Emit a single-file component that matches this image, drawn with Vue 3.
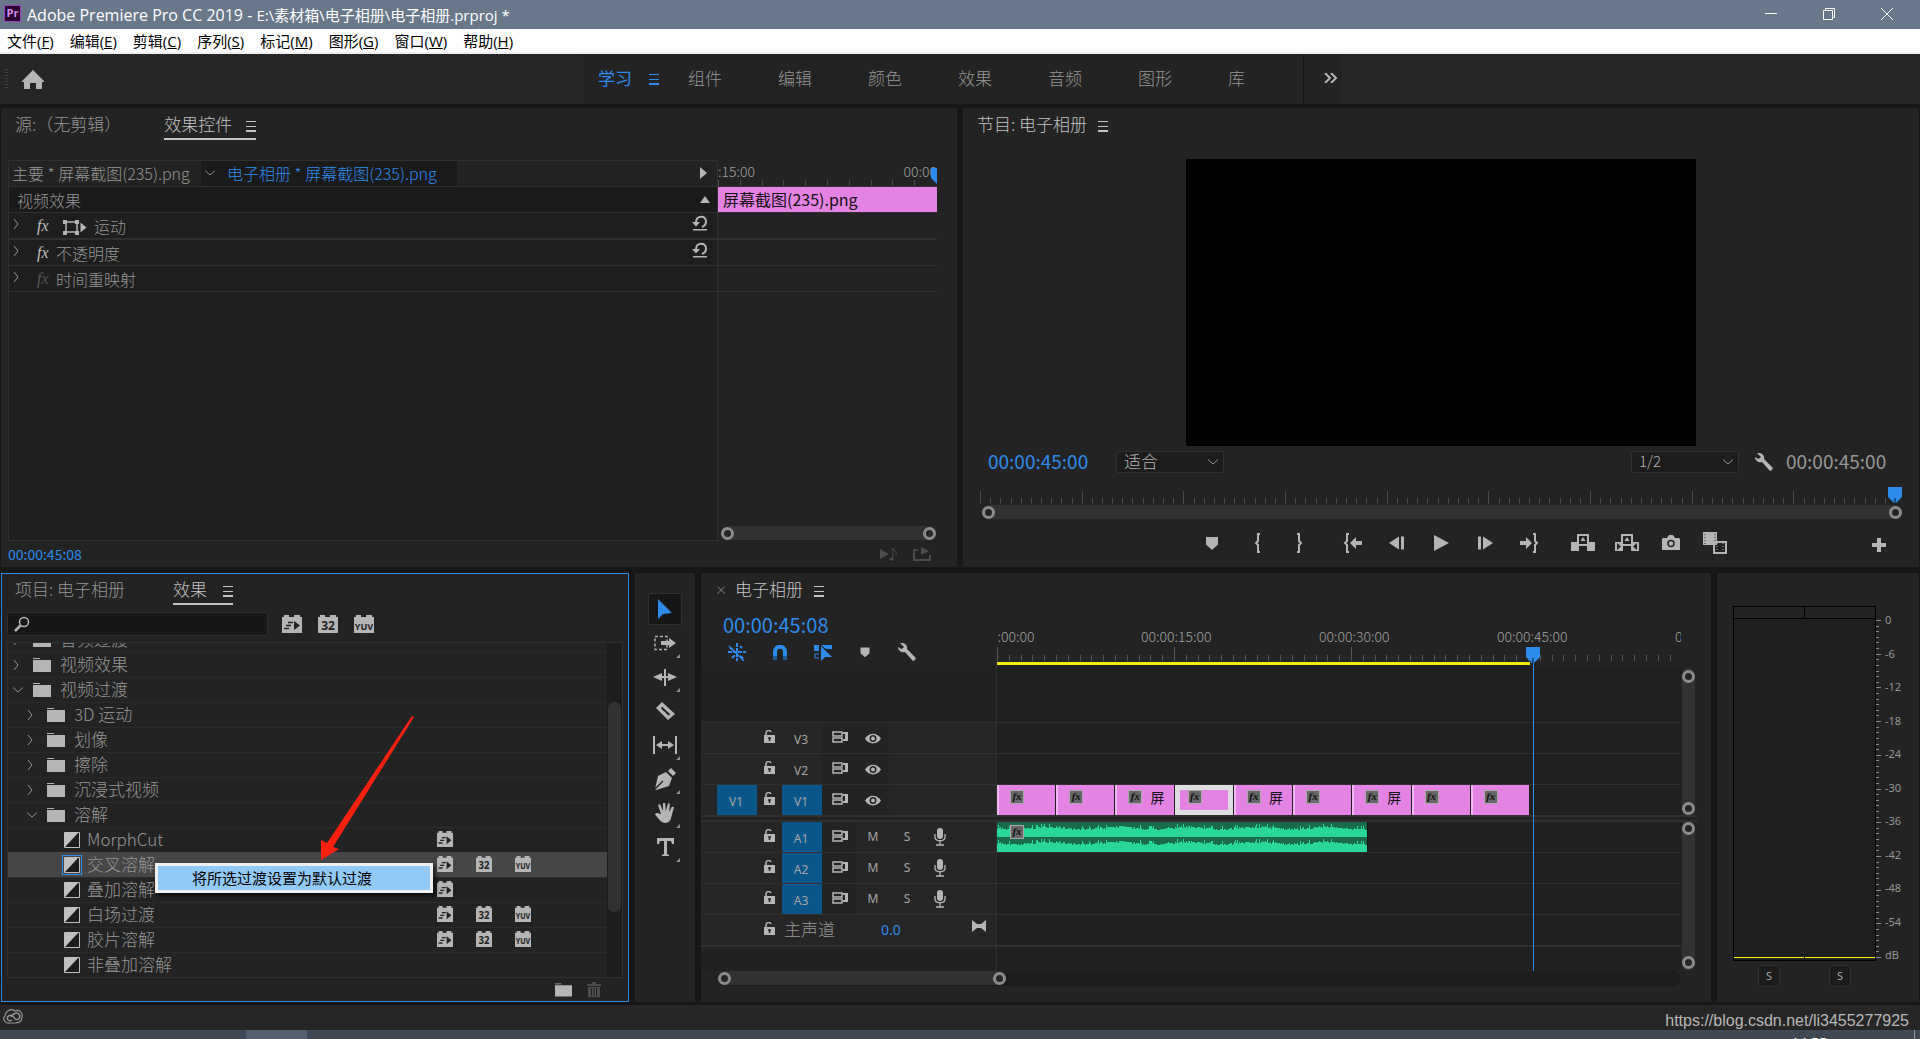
<script setup>
const menus = [
  ['文件', 'F'], ['编辑', 'E'], ['剪辑', 'C'], ['序列', 'S'],
  ['标记', 'M'], ['图形', 'G'], ['窗口', 'W'], ['帮助', 'H'],
]

const workspaces = ['学习', '组件', '编辑', '颜色', '效果', '音频', '图形', '库']

const effectRows = [
  { name: '运动', motion: true, reset: true, thick: true },
  { name: '不透明度', reset: true },
  { name: '时间重映射', dim: true },
]

const transport = [
  ['marker', 16], ['in', 12], ['out', 12], ['goin', 20], ['stepback', 16], ['play', 16],
  ['stepfwd', 16], ['goout', 20], ['lift', 24], ['extract', 24], ['camera', 18], ['compare', 24],
]

const tree = [
  { kind: 'folder', level: 0, name: '音频过渡' },
  { kind: 'folder', level: 0, name: '视频效果' },
  { kind: 'folder', level: 0, name: '视频过渡', open: true },
  { kind: 'folder', level: 1, name: '3D 运动' },
  { kind: 'folder', level: 1, name: '划像' },
  { kind: 'folder', level: 1, name: '擦除' },
  { kind: 'folder', level: 1, name: '沉浸式视频' },
  { kind: 'folder', level: 1, name: '溶解', open: true },
  { kind: 'leaf', name: 'MorphCut', badges: ['fast'] },
  { kind: 'leaf', name: '交叉溶解', badges: ['fast', '32', 'YUV'], selected: true },
  { kind: 'leaf', name: '叠加溶解', badges: ['fast'] },
  { kind: 'leaf', name: '白场过渡', badges: ['fast', '32', 'YUV'] },
  { kind: 'leaf', name: '胶片溶解', badges: ['fast', '32', 'YUV'] },
  { kind: 'leaf', name: '非叠加溶解', badges: [] },
]

const tools = [
  { id: 'select', label: '选择工具', active: true },
  { id: 'trackselect', label: '向前选择轨道工具', more: true },
  { id: 'ripple', label: '波纹编辑工具', more: true },
  { id: 'razor', label: '剃刀工具' },
  { id: 'slip', label: '外滑工具', more: true },
  { id: 'pen', label: '钢笔工具', more: true },
  { id: 'hand', label: '手形工具', more: true },
  { id: 'type', label: '文字工具', more: true },
]

const videoTracks = [{ id: 'V3' }, { id: 'V2' }, { id: 'V1', on: true }]
const audioTracks = ['A1', 'A2', 'A3']

const clips = [
  {}, {}, { label: '屏' }, { selected: true }, { label: '屏' }, {}, { label: '屏' }, {}, {},
]

const SECONDS_15 = 177
const timelineTicks = Array.from({ length: 58 }, (_, i) => ({
  x: Math.round((i * SECONDS_15) / 15),
  big: i % 15 === 0,
})).filter((t) => t.x < 676)
const timelineLabels = [
  { text: '00:00:00:00', x: 0 },
  { text: '00:00:15:00', x: SECONDS_15 },
  { text: '00:00:30:00', x: SECONDS_15 * 2 + 1 },
  { text: '00:00:45:00', x: SECONDS_15 * 3 + 2 },
  { text: '00:01:00:00', x: SECONDS_15 * 4 + 3 },
]

const programTicks = Array.from({ length: 90 }, (_, i) => ({
  x: `${(i / 90) * 100}%`,
  big: i % 10 === 0,
}))

const meterTicks = Array.from({ length: 61 }, (_, i) => ({
  y: `${(i / 60) * 100}%`,
  big: i % 6 === 0,
}))
const meterLabels = ['0', '-6', '-12', '-18', '-24', '-30', '-36', '-42', '-48', '-54', 'dB']

function wavePath(base) {
  let seed = 7
  let d = `M0 ${base + 15}`
  for (let x = 0; x < 370; x += 1) {
    seed = (seed * 1103 + 377) % 7919
    const r = seed / 7919
    const peak = r > 0.9 ? 3 : r < 0.12 ? -1 : Math.round(r * 2 - 1)
    const y = base + 6 - peak + Math.round(Math.sin(x / 11))
    d += `V${y}h1`
  }
  return `${d}V${base + 15}z`
}
const waves = [wavePath(0), wavePath(15)]
</script>

<template>
  <div class="app">
    <svg class="defs" aria-hidden="true">
      <symbol id="home" viewBox="0 0 22 19"><path d="M11 0 0 11v1h2v7h6v-6h6v6h6v-7h2v-1z" /></symbol>
      <symbol id="chev" viewBox="0 0 6 10"><path d="M1 0l4 5-4 5" fill="none" stroke="currentColor" /></symbol>
      <symbol id="chevdown" viewBox="0 0 10 6"><path d="M0 .5l5 4.500 5-4.500" fill="none" stroke="currentColor" /></symbol>
      <symbol id="more" viewBox="0 0 14 10"><path d="M1 0l5 5-5 5M7 0l5 5-5 5" fill="none" stroke="currentColor" stroke-width="2" /></symbol>
      <symbol id="motion" viewBox="0 0 24 16">
        <path d="M3 3h11v10H3z" fill="none" stroke="currentColor" stroke-width="1.500" />
        <path d="M0 1h4v4H0zM12 1h4v4h-4zM0 12h4v4H0zM12 12h4v4h-4zM17.500 3.500v10l6-5z" />
      </symbol>
      <symbol id="reset" viewBox="0 0 16 16">
        <path d="M4 7C4 0 14 0 14 6.500c0 3-1.500 4.500-4 5.500" fill="none" stroke="currentColor" stroke-width="2" />
        <path d="M0 7h8l-4 4.500zM1 14h14v1.500H1z" />
      </symbol>
      <symbol id="wrench" viewBox="0 0 18 18"><path d="M2 0C6-1 10 2 9 6l8.500 8.500c1 1.500-1.500 4-3 3L7 9C4 10 0 8 0 4l3.500 2L6 4z" /></symbol>
      <symbol id="marker" viewBox="0 0 16 16"><path d="M2 2h12v7.500L8 15 2 9.500z" /></symbol>
      <symbol id="in" viewBox="0 0 12 20"><path d="M8 1H6v7l-2 2 2 2v7h2" fill="none" stroke="currentColor" stroke-width="2" /></symbol>
      <symbol id="out" viewBox="0 0 12 20"><path d="M4 1h2v7l2 2-2 2v7H4" fill="none" stroke="currentColor" stroke-width="2" /></symbol>
      <symbol id="goin" viewBox="0 0 20 20"><path d="M6 1H4v7l-2 2 2 2v7h2" fill="none" stroke="currentColor" stroke-width="2" /><path d="M7 10l6-6v4h6v4h-6v4z" /></symbol>
      <symbol id="goout" viewBox="0 0 20 20"><path d="M14 1h2v7l2 2-2 2v7h-2" fill="none" stroke="currentColor" stroke-width="2" /><path d="M13 10L7 4v4H1v4h6v4z" /></symbol>
      <symbol id="stepback" viewBox="0 0 16 16"><path d="M10 1.500v13L0 8zM12 1.500h3v13h-3z" /></symbol>
      <symbol id="stepfwd" viewBox="0 0 16 16"><path d="M6 1.500v13L16 8zM1 1.500h3v13H1z" /></symbol>
      <symbol id="play" viewBox="0 0 16 18"><path d="M1 1l15 8-15 8z" /></symbol>
      <symbol id="lift" viewBox="0 0 24 20">
        <path d="M0 9h8v9H0zM16 9h8v9h-8zM8 11h8v2H8zM9.500 8l2.500-4 2.500 4z" />
        <path d="M7 10V2h10v8" fill="none" stroke="currentColor" stroke-width="2" />
      </symbol>
      <symbol id="extract" viewBox="0 0 24 20">
        <path d="M0 9h8v9H0zM16 9h8v9h-8zM8 11h8v2H8zM9.500 8l2.500-4 2.500 4z" />
        <path d="M7 10V2h10v8" fill="none" stroke="currentColor" stroke-width="2" />
        <path d="M2 10l4 3.500L2 17zM22 10l-4 3.500 4 3.500z" fill="#232323" />
      </symbol>
      <symbol id="camera" viewBox="0 0 18 16">
        <path d="M1 3h4l2-3h4l2 3h4l1 1v11H0V4z" /><circle cx="9" cy="8.500" r="3" fill="none" stroke="#232323" stroke-width="1.500" />
      </symbol>
      <symbol id="compare" viewBox="0 0 24 22">
        <path d="M0 0h14v13H0z" /><path d="M2 2v10M12 2v8" stroke="#232323" stroke-dasharray="1 2" />
        <path d="M12 10h11v11H11V13" fill="none" stroke="currentColor" stroke-width="2" /><path d="M14 11v9M20 11v9" stroke="currentColor" stroke-dasharray="1 2" />
      </symbol>
      <symbol id="plus" viewBox="0 0 14 14"><path d="M5 0h4v5h5v4H9v5H5V9H0V5h5z" /></symbol>
      <symbol id="playnote" viewBox="0 0 18 14"><path d="M0 2v10l9-5z" /><path d="M13 12V1c1 3 4 3 3 7" fill="none" stroke="currentColor" /><ellipse cx="11.500" cy="12" rx="2" ry="1.500" /></symbol>
      <symbol id="export" viewBox="0 0 18 14"><path d="M5 3H1v10h16V8" fill="none" stroke="currentColor" stroke-width="2" /><path d="M8 0l8 4-8 4z" /></symbol>
      <symbol id="search" viewBox="0 0 16 16"><circle cx="10" cy="6" r="4.500" fill="none" stroke="currentColor" stroke-width="1.500" /><path d="M6.500 9.500L1 15" stroke="currentColor" stroke-width="2.500" /></symbol>
      <symbol id="folder" viewBox="0 0 18 14"><path d="M0 0h7v1H0zM0 2h18v12H0z" /></symbol>
      <symbol id="trash" viewBox="0 0 14 15"><path d="M0 2h14v2H0zM5 0h4v2H5zM1 5h12v10H1z" /><path d="M4.500 6v8M7 6v8M9.500 6v8" stroke="#232323" /></symbol>
      <symbol id="transition" viewBox="0 0 16 16"><path d="M.5.500h15v15H.5z" fill="#1c1c1c" stroke="currentColor" /><path d="M1 1h13L1 15z" /></symbol>
      <symbol id="brick" viewBox="0 0 20 18"><path d="M0 2h2V0h5v2h5V0h6v2h2v16H0z" /></symbol>
      <symbol id="fast" viewBox="0 0 20 18"><path d="M12 6l6 4.500-6 4.500z" fill="#222" /><path d="M6 7.500h5M4 10.500h5M2 13.500h5" stroke="#222" stroke-width="1.500" /></symbol>
      <symbol id="select" viewBox="0 0 24 24"><path d="M5 2v20l5-5 9-1z" /></symbol>
      <symbol id="trackselect" viewBox="0 0 24 24"><path d="M2 5.500h12v13H2z" fill="none" stroke="currentColor" stroke-width="1.500" stroke-dasharray="3 2" /><path d="M8 10h8V7l7 5-7 5v-3H8z" /></symbol>
      <symbol id="ripple" viewBox="0 0 24 24"><path d="M11 4h2v17h-2zM0 12l9-4v3h6V8l9 4-9 4v-3H9v3z" /></symbol>
      <symbol id="razor" viewBox="0 0 24 24"><path d="M9 3l13 12-7 6L3 9z" /><path d="M8.500 8.500l8 7.500" stroke="#232323" stroke-width="2" /><path d="M10 12l2-2M13 15l2-2" stroke="#232323" /></symbol>
      <symbol id="slip" viewBox="0 0 24 24"><path d="M0 3h2v18H0zM22 3h2v18h-2zM3 12l6-4v3h6V8l6 4-6 4v-3H9v3z" /></symbol>
      <symbol id="pen" viewBox="0 0 24 24"><path d="M15 4l3-3 5 5-3 3zM13 5l6 6-3 8-13 4-1-1L5 9z" /><path d="M2 22l8-8" stroke="#232323" stroke-width="1.500" /></symbol>
      <symbol id="hand" viewBox="0 0 24 24"><path d="M8 13L5 4l2-1 3 7V2h2.200l.6 8L15 2.500h2L16 11l3-5.500 2 .8-2.500 9C18 19 16 22 12.500 22 8 22 6 18 2 13.500l1-1.500c2 0 3 .6 5 1z" /></symbol>
      <symbol id="type" viewBox="0 0 24 24"><path d="M4 3h17v6h-2l-1-3h-4v13l2 1v1H9v-1l2-1V6H7L6 9H4z" /></symbol>
      <symbol id="nest" viewBox="0 0 18 18"><path d="M9 0v18M0 9h18M2 5l3 2M12 3l2 2M4 15l3-3M12 13l4 3" stroke="currentColor" stroke-width="2" stroke-dasharray="4 1" /><path d="M1 3l15 15" stroke="currentColor" stroke-width="1.500" /></symbol>
      <symbol id="magnet" viewBox="0 0 14 15"><path d="M2 14V7c0-7 10-7 10 0v7" fill="none" stroke="currentColor" stroke-width="4" /><path d="M0 11h4v4H0zM10 11h4v4h-4z" fill="#1a5c9c" /></symbol>
      <symbol id="linked" viewBox="0 0 18 17"><path d="M0 1h5v6H0zM7 1h11v4h-6L7 1zM7 2v15l4-4 7 0z" /><path d="M5 10H1v4h4" fill="none" stroke="currentColor" /></symbol>
      <symbol id="lock" viewBox="0 0 12 14"><path d="M0 5h11v8H0z" /><path d="M2 6V3c0-3 4-3 5-1" fill="none" stroke="currentColor" stroke-width="1.500" /><path d="M4 8h3M5.500 8v3" stroke="#232323" stroke-width="1.500" /></symbol>
      <symbol id="sync" viewBox="0 0 16 12"><path d="M1 1h9v4H1zM1 7h9v4H1z" fill="none" stroke="currentColor" stroke-width="1.500" /><path d="M11 1h5v9h-5V8h2V3h-2z" /></symbol>
      <symbol id="eye" viewBox="0 0 16 11"><path d="M0 5.500C4-1 12-1 16 5.500 12 12 4 12 0 5.500z" /><circle cx="8" cy="5.500" r="3.500" fill="#232323" /><circle cx="8" cy="5.500" r="2" /></symbol>
      <symbol id="mic" viewBox="0 0 12 18"><rect x="3" y="0" width="6" height="11" rx="3" /><path d="M1 6v3c0 5 10 5 10 0V6M6 13v4M2 17h8" fill="none" stroke="currentColor" stroke-width="1.300" /></symbol>
      <symbol id="bow" viewBox="0 0 14 12"><path d="M0 0l5 4h4l5-4v12L9 8H5l-5 4z" /></symbol>
      <symbol id="cc" viewBox="0 0 20 16">
        <path d="M7 14C2 15-1 10 2 7 3 1 9-1 12 2c4-2 8 1 7 6 0 4-3 6-7 6z" fill="none" stroke="currentColor" stroke-width="1.200" />
        <path d="M9 11C6 13 3 10 5 7.500s5-1 6 1 3 3 5 1 0-6-3-5.500C11 4.500 9 6 8 8" fill="none" stroke="currentColor" stroke-width="1.500" />
      </symbol>
      <symbol id="head" viewBox="0 0 14 16"><path d="M0 0h14v10l-6 6H6l-6-6z" fill="#2d8ceb" /><path d="M7 11v5" stroke="#0a1a2a" /></symbol>
    </svg>

    <header class="titlebar">
      <span class="logo">Pr</span>
      <h1>Adobe Premiere Pro CC 2019 - <span>E:\素材箱\电子相册\电子相册.prproj *</span></h1>
      <div class="win">
        <button aria-label="最小化"><svg width="12" height="12"><path d="M0 5.500h12" stroke="#fff" /></svg></button>
        <button aria-label="还原"><svg width="12" height="12"><path d="M.5 2.500h9v9h-9zM2.500 2V.500h9v9H10" fill="none" stroke="#fff" /></svg></button>
        <button aria-label="关闭"><svg width="12" height="12"><path d="M0 0l12 12M12 0L0 12" stroke="#fff" /></svg></button>
      </div>
    </header>

    <nav class="menubar">
      <button v-for="m in menus" :key="m[1]">{{ m[0] }}(<u>{{ m[1] }}</u>)</button>
    </nav>

    <div class="workspaces">
      <span class="grip"></span>
      <button class="homebtn" aria-label="主页"><svg width="22" height="19"><use href="#home" /></svg></button>
      <div class="wslist">
        <button v-for="(w, i) in workspaces" :key="w" :class="{ active: i === 0 }">
          {{ w }}<i v-if="i === 0" class="burger"></i>
        </button>
      </div>
      <button class="wsmore" aria-label="更多"><svg width="14" height="10"><use href="#more" /></svg></button>
    </div>

    <main class="main">
      <div class="row top">
        <section class="panel controls">
          <div class="tabs">
            <button>源:（无剪辑）</button>
            <button class="active">效果控件<i class="burger"></i></button>
          </div>
          <div class="ecbox">
            <div class="ecrow echead">
              <div class="ecleft">
                <span class="master">主要 * 屏幕截图(235).png</span>
                <span class="seq"><svg width="10" height="6"><use href="#chevdown" /></svg>电子相册 * 屏幕截图(235).png</span>
                <svg class="tri" width="7" height="12"><path d="M0 0l7 6-7 6z" /></svg>
              </div>
              <div class="ecright ecruler">
                <span>:15:00</span><span>00:00</span>
                <i v-for="n in 10" :key="n" class="t" :style="{ left: Math.round((n - 1) * 21.8) + 'px' }"></i>
                <svg class="echeadmark" width="14" height="16"><use href="#head" /></svg>
              </div>
            </div>
            <div class="ecrow ecgroup">
              <div class="ecleft">视频效果<svg class="tri" width="10" height="7"><path d="M0 7l5-7 5 7z" /></svg></div>
              <div class="ecright ecclip">屏幕截图(235).png</div>
            </div>
            <div v-for="r in effectRows" :key="r.name" class="ecrow" :class="{ thick: r.thick }">
              <div class="ecleft">
                <svg class="chev" width="6" height="10"><use href="#chev" /></svg>
                <span class="fx" :class="{ dim: r.dim }">fx</span>
                <svg v-if="r.motion" class="motion" width="24" height="16"><use href="#motion" /></svg>
                <span>{{ r.name }}</span>
                <svg v-if="r.reset" class="reset" width="16" height="16"><use href="#reset" /></svg>
              </div>
              <div class="ecright"></div>
            </div>
            <div class="ecrest">
              <div class="ecleft"></div>
              <div class="ecright"><div class="range"><i></i><i></i></div></div>
            </div>
          </div>
          <footer>
            <span class="tc">00:00:45:08</span>
            <svg width="18" height="14"><use href="#playnote" /></svg>
            <svg width="18" height="14"><use href="#export" /></svg>
          </footer>
        </section>

        <section class="panel program">
          <div class="tabs"><button class="active plain">节目: 电子相册<i class="burger"></i></button></div>
          <div class="stage"><div class="video"></div></div>
          <div class="ctl">
            <span class="ptc">00:00:45:00</span>
            <label class="dd"><select aria-label="缩放级别"><option>适合</option></select><svg width="10" height="6"><use href="#chevdown" /></svg></label>
            <label class="dd right"><select aria-label="播放分辨率"><option>1/2</option></select><svg width="10" height="6"><use href="#chevdown" /></svg></label>
            <svg class="wr" width="18" height="18"><use href="#wrench" /></svg>
            <span class="ptc grey">00:00:45:00</span>
          </div>
          <div class="pruler">
            <svg width="100%" height="13" shape-rendering="crispEdges">
              <rect v-for="t in programTicks" :key="t.x" :x="t.x" :y="t.big ? 0 : 7" width="1" :height="t.big ? 13 : 6" fill="#4a4a4a" />
            </svg>
            <svg class="phead" width="14" height="16"><use href="#head" /></svg>
          </div>
          <div class="range prange"><i></i><i></i></div>
          <div class="transport">
            <span class="side"></span>
            <div class="btns">
              <button v-for="b in transport" :key="b[0]" :class="b[0]" :aria-label="b[0]"><svg :width="b[1]" :height="b[0] === 'compare' ? 22 : 20"><use :href="'#' + b[0]" /></svg></button>
            </div>
            <span class="side"><button aria-label="按钮编辑器"><svg width="14" height="14"><use href="#plus" /></svg></button></span>
          </div>
        </section>
      </div>

      <div class="row bottom">
        <section class="panel effects">
          <div class="tabs">
            <button>项目: 电子相册</button>
            <button class="active">效果<i class="burger"></i></button>
          </div>
          <div class="searchrow">
            <label class="search"><svg width="16" height="16"><use href="#search" /></svg><input type="text" aria-label="搜索效果" /></label>
            <button v-for="b in ['fast', '32', 'YUV']" :key="b" class="brick" :aria-label="b">
              <svg width="20" height="18"><use href="#brick" /><use v-if="b === 'fast'" href="#fast" /><text v-else x="10" y="15" text-anchor="middle" :class="'t' + b">{{ b }}</text></svg>
            </button>
          </div>
          <div class="listbox">
            <ul class="tree">
              <li v-for="n in tree" :key="n.name" :class="[n.kind, 'l' + (n.level || 0), { selected: n.selected }]">
                <template v-if="n.kind === 'folder'">
                  <span class="tw"><svg v-if="n.open" width="10" height="6"><use href="#chevdown" /></svg><svg v-else width="6" height="10"><use href="#chev" /></svg></span>
                  <svg class="fold" width="18" height="14"><use href="#folder" /></svg>
                </template>
                <span v-else class="trans"><svg width="16" height="16"><use href="#transition" /></svg></span>
                <span class="nm">{{ n.name }}</span>
                <span v-if="n.badges" class="badges">
                  <svg v-for="b in n.badges" :key="b" viewBox="0 0 20 18" width="16" height="16" preserveAspectRatio="none"><use href="#brick" width="20" height="18" /><use v-if="b === 'fast'" href="#fast" width="20" height="18" /><text v-else x="10" y="15" text-anchor="middle" :class="'t' + b">{{ b }}</text></svg>
                </span>
              </li>
            </ul>
            <div class="sb"><i></i></div>
          </div>
          <div class="efoot">
            <button aria-label="新建自定义素材箱"><svg width="17" height="14"><use href="#folder" /></svg></button>
            <button class="off" aria-label="删除"><svg width="14" height="15"><use href="#trash" /></svg></button>
          </div>
          <div class="ctx"><button>将所选过渡设置为默认过渡</button></div>
          <svg class="arrow" width="96" height="146"><path d="M1 144V124l6 3L92 0l2 1-81 130 6 2z" fill="#ff2010" /></svg>
        </section>

        <section class="panel tools">
          <button v-for="t in tools" :key="t.id" :class="{ active: t.active }" :aria-label="t.label">
            <svg width="24" height="24"><use :href="'#' + t.id" /></svg><i v-if="t.more"></i>
          </button>
        </section>

        <section class="panel timeline">
          <div class="tabs"><span class="close">×</span><button class="active plain">电子相册<i class="burger"></i></button></div>
          <div class="tlmain">
            <div class="tracks">
              <div class="tltop">
                <div class="tlhead">
                  <span class="bigtc">00:00:45:08</span>
                  <div class="tlicons">
                    <svg width="18" height="18"><use href="#nest" /></svg>
                    <svg width="14" height="15"><use href="#magnet" /></svg>
                    <svg width="18" height="17"><use href="#linked" /></svg>
                    <svg class="g" width="12" height="14"><use href="#marker" /></svg>
                    <svg class="g" width="18" height="18"><use href="#wrench" /></svg>
                  </div>
                </div>
                <div class="ruler">
                  <span v-for="l in timelineLabels" :key="l.text" class="lab" :style="{ left: l.x + 'px' }">{{ l.text }}</span>
                  <svg class="ticks" width="100%" height="14" shape-rendering="crispEdges">
                    <rect v-for="t in timelineTicks" :key="t.x" :x="t.x" :y="t.big ? 0 : 8" width="1" :height="t.big ? 14 : 6" fill="#565656" />
                  </svg>
                  <div class="work"></div>
                </div>
              </div>
              <div class="track blank"><div class="hd"></div><div class="lane"></div></div>
              <div v-for="t in videoTracks" :key="t.id" class="track">
                <div class="hd">
                  <span class="src" :class="{ on: t.on }">{{ t.on ? 'V1' : '' }}</span>
                  <svg class="lk" width="12" height="14"><use href="#lock" /></svg>
                  <span class="tgt" :class="{ on: t.on }">{{ t.id }}</span>
                  <span class="mid"><svg width="16" height="12"><use href="#sync" /></svg><svg width="16" height="11"><use href="#eye" /></svg></span>
                </div>
                <div class="lane">
                  <div v-if="t.on" class="clips">
                    <div v-for="(c, i) in clips" :key="i" class="clip" :class="{ selected: c.selected }"><b class="fxb">fx</b>{{ c.label }}</div>
                  </div>
                </div>
              </div>
              <div class="split"></div>
              <div v-for="(a, i) in audioTracks" :key="a" class="track" :class="{ first: i === 0 }">
                <div class="hd">
                  <span class="src"></span>
                  <svg class="lk" width="12" height="14"><use href="#lock" /></svg>
                  <span class="tgt on">{{ a }}</span>
                  <span class="mid audio"><svg width="16" height="12"><use href="#sync" /></svg></span>
                  <span class="ms">M</span><span class="ms">S</span>
                  <svg class="mic" width="12" height="18"><use href="#mic" /></svg>
                </div>
                <div class="lane">
                  <div v-if="i === 0" class="aclip">
                    <svg width="370" height="30" shape-rendering="crispEdges"><path v-for="w in waves" :key="w" :d="w" fill="#29d898" /></svg>
                    <b class="fxb">fx</b>
                  </div>
                </div>
              </div>
              <div class="track">
                <div class="hd">
                  <span class="src"></span>
                  <svg class="lk" width="12" height="14"><use href="#lock" /></svg>
                  <span class="mname">主声道</span><span class="mval">0.0</span>
                  <svg class="bow" width="14" height="12"><use href="#bow" /></svg>
                </div>
                <div class="lane"></div>
              </div>
              <div class="track tail"><div class="hd"></div><div class="lane"></div></div>
              <div class="playhead"><svg width="14" height="16"><use href="#head" /></svg></div>
            </div>
            <div class="vs"><div class="range v grow"><i></i><i></i></div><div class="range v"><i></i><i></i></div></div>
          </div>
          <div class="hs"><div class="range"><i></i><i></i></div></div>
        </section>

        <section class="panel meters">
          <div class="mbody">
            <div class="mbox"><div class="mtop"><i></i><i></i></div><div class="mlow"><i></i><i></i></div></div>
            <svg class="mticks" width="5" height="100%" shape-rendering="crispEdges">
              <rect v-for="t in meterTicks" :key="t.y" x="0" :y="t.y" :width="t.big ? 5 : 3" height="1" fill="#8a8a8a" />
            </svg>
            <div class="mlabels"><span v-for="l in meterLabels" :key="l">{{ l }}</span></div>
          </div>
          <div class="solo"><button aria-label="独奏左声道">S</button><button aria-label="独奏右声道">S</button></div>
        </section>
      </div>
    </main>

    <footer class="status">
      <svg width="20" height="16"><use href="#cc" /></svg>
      <span>https://blog.csdn.net/li3455277925</span>
    </footer>
    <div class="taskbar"><i class="task"></i><span>14:55</span><i class="edge"></i></div>
  </div>
</template>

<style>
body { margin: 0; background: #161616; }
</style>

<style scoped>
* { box-sizing: border-box; }
.app {
  display: flex; flex-direction: column; height: 100vh; min-height: 800px; overflow: hidden;
  background: #161616; color: #969696;
  font: 300 17px/20px "Noto Sans CJK SC", "Noto Sans", sans-serif;
}
.defs { position: absolute; width: 0; height: 0; }
svg { display: block; flex: none; fill: currentColor; }
button { border: 0; padding: 0; background: none; color: inherit; font: inherit; }
i { display: block; font-style: normal; }

.titlebar { flex: none; display: flex; align-items: center; height: 29px; padding-left: 4px; background: #68778a; }
.logo { width: 17px; height: 17px; margin-bottom: 2px; border: 1px solid #9a3fc0; background: #2a0030; color: #d58cf5; font: 700 11px/14px "Open Sans", sans-serif; text-align: center; }
h1 { flex: 1; margin: 0 0 0 6px; color: #fff; font: 400 16px/20px "Open Sans", "Noto Sans CJK SC", sans-serif; }
h1 span { font-size: 15px; }
.win { display: flex; padding: 0 4px 2px 0; }
.win button { width: 58px; display: flex; justify-content: center; }
.menubar { flex: none; display: flex; gap: 16px; height: 25px; padding: 0 7px; border-bottom: 2px solid #f0f0f0; background: #fff; color: #000; font: 400 15px/24px "Open Sans", "Noto Sans CJK SC", sans-serif; }

.workspaces { flex: none; display: flex; align-items: center; height: 50px; margin-bottom: 4px; background: #262626; }
.grip { width: 3px; height: 20px; margin-left: 5px; background: repeating-linear-gradient(#444 0 1px, transparent 1px 3px); }
.homebtn { margin-left: 14px; color: #b5b5b5; }
.wslist { display: flex; align-items: center; height: 50px; width: 721px; margin-left: 539px; padding: 0 0 3px 15px; border-right: 1px solid #171717; background: #232323; }
.wslist button { flex: none; width: 90px; height: 22px; text-align: left; }
.wslist button:last-child { width: 60px; }
.wslist .active { display: flex; align-items: center; color: #2d8ceb; font-weight: 400; }
.wslist .active .burger { margin-left: 17px; }
.wsmore { width: 37px; height: 50px; padding: 0 0 2px 20px; background: #232323; color: #b5b5b5; }

.burger { flex: none; width: 10px; height: 11px; margin-top: 4px; background: linear-gradient(currentColor 0 1px, transparent 1px 5px, currentColor 5px 6px, transparent 6px 9px, currentColor 9px 11px); }

.main { flex: 1; min-height: 0; display: grid; grid-template-rows: 459fr 429fr; gap: 6px; padding: 0 1px; }
.row { display: grid; gap: 6px; min-height: 0; }
.top { grid-template-columns: 1fr 1fr; }
.bottom { grid-template-columns: 628px 60px 1fr 202px; }
.panel { position: relative; display: flex; flex-direction: column; min-width: 0; min-height: 0; background: #232323; }
.tabs { flex: none; display: flex; padding: 6px 0 0 14px; height: 36px; }
.tabs button { display: flex; align-items: center; height: 26px; margin-right: 43px; padding-bottom: 6px; white-space: nowrap; }
.tabs .active { gap: 14px; border-bottom: 2px solid #c4c4c4; padding-bottom: 4px; color: #c4c4c4; }
.tabs .plain { gap: 11px; border: 0; padding-bottom: 6px; }

.range { display: flex; justify-content: space-between; align-items: center; height: 14px; border-radius: 7px; background: #323232; }
.range i { width: 13px; height: 13px; border: 3px solid #8c8c8c; border-radius: 50%; background: #262626; }
.range.v { flex-direction: column; width: 13px; height: 151px; }

/* effect controls */
.controls .tabs { height: 52px; }
.ecbox { flex: 1; display: flex; flex-direction: column; margin: 0 20px 0 7px; font-size: 16px; }
.ecrow { display: flex; height: 26px; border-bottom: 1px solid #303030; }
.echead { height: 27px; }
.ecrow.thick { height: 27px; border-bottom-width: 2px; }
.ecleft { flex: 1; display: flex; align-items: center; border: solid #303030; border-width: 0 1px; background: #1e1e1e; }
.ecright { position: relative; width: 219px; overflow: hidden; }
.echead .ecleft { border-top: 1px solid #303030; padding-left: 3px; background: #232323; }
.echead .ecleft span { padding-bottom: 2px; }
.ecleft .master { width: 189px; white-space: nowrap; }
.ecleft .seq { display: flex; align-items: center; gap: 12px; height: 25px; width: 256px; padding: 0 4px; background: #1a1a1a; color: #2d8ceb; white-space: nowrap; }
.seq svg { color: #8f8f8f; }
.tri { margin: 0 10px 2px auto; color: #b5b5b5; }
.ecgroup .ecleft { padding-left: 8px; background: #1a1a1a; }
.ecgroup .tri { margin: 0 7px 0 auto; }
.ecclip { padding-left: 5px; background: #e483e4; color: #111; line-height: 24px; font-weight: 400; }
.ecruler { display: flex; justify-content: space-between; font-size: 14px; line-height: 23px; color: #a0a0a0; }
.ecruler .t { position: absolute; bottom: 0; width: 1px; height: 6px; background: #4a4a4a; }
.echeadmark { position: absolute; right: -8px; bottom: 2px; }
.chev { margin: 0 18px 3px 4px; }
.fx { width: 19px; color: #c0c0c0; font: italic 400 16px/20px "Liberation Serif", serif; }
.fx.dim { color: #555; }
.motion { margin: 3px 7px 0; color: #b5b5b5; }
.reset { margin: 0 9px 5px auto; color: #b5b5b5; }
.ecrest { flex: 1; display: flex; }
.ecrest .ecleft { border-bottom: 1px solid #303030; }
.ecrest .ecright { display: flex; flex-direction: column; justify-content: flex-end; }
.ecrest .range { margin: 0 1px 1px 3px; }
.controls footer { flex: none; display: flex; align-items: center; gap: 15px; height: 26px; padding: 0 26px 0 7px; color: #4c4c4c; }
.tc { flex: 1; color: #2d8ceb; font-size: 14px; font-weight: 400; }

/* program monitor */
.stage { flex: 1; min-height: 0; display: flex; justify-content: center; padding-top: 15px; }
.video { height: 100%; aspect-ratio: 16 / 9; background: #000; }
.ctl { flex: none; display: flex; align-items: center; height: 34px; padding: 0 34px 3px 25px; }
.ptc { width: 99px; padding-bottom: 1px; color: #2d8ceb; font-size: 19px; font-weight: 400; white-space: nowrap; }
.ptc.grey { color: #969696; }
.dd { position: relative; width: 108px; height: 22px; margin-left: 29px; }
.dd.right { margin-left: auto; }
.dd select { display: block; width: 100%; height: 22px; padding: 0 7px 2px; border: 1px solid #303030; border-radius: 2px; appearance: none; background: #1c1c1c; color: #b5b5b5; font: inherit; line-height: 18px; }
.dd.right select { font-size: 15px; }
.dd svg { position: absolute; right: 6px; top: 8px; pointer-events: none; }
.wr { margin: 0 13px 0 16px; color: #b5b5b5; }
.pruler { flex: none; position: relative; margin: 11px 24px 0 17px; height: 14px; }
.phead { position: absolute; right: -7px; top: -4px; }
.prange { flex: none; margin: 0 17px 0 19px; }
.transport { flex: none; display: flex; align-items: center; height: 48px; padding-left: 45px; color: #b5b5b5; }
.side { flex: 1; display: flex; justify-content: flex-end; padding: 3px 33px 0 0; }
.btns { display: flex; align-items: center; }
.btns button { display: flex; justify-content: center; width: 44px; }
.btns .in { margin: 0 -3px 0 2px; }
.btns .goin, .btns .lift { margin-left: 10px; }

/* effects browser */
.effects { border: 1px solid #2d8ceb; }
.effects .tabs { padding: 5px 0 0 13px; }
.effects .tabs button { margin-right: 48px; }
.effects .tabs .active { gap: 16px; }
.searchrow { flex: none; display: flex; align-items: center; gap: 16px; height: 30px; margin: 0 0 2px 5px; padding-bottom: 2px; }
.search { display: flex; align-items: center; width: 261px; height: 24px; margin-right: -2px; padding-left: 6px; border: 1px solid #303030; border-radius: 3px; background: #171717; color: #b5b5b5; }
.search input { flex: 1; min-width: 0; border: 0; outline: 0; background: none; color: inherit; font: inherit; }
.brick, .badges { color: #b5b5b5; }
text { fill: #222; font: 700 12px "Open Sans", sans-serif; }
.tYUV { font-size: 9px; }
.listbox { flex: 1; min-height: 0; display: flex; margin: 0 5px; border: 1px solid #303030; }
.tree { flex: 1; display: flex; flex-direction: column; justify-content: flex-end; overflow: hidden; margin: 0; padding: 0; list-style: none; }
.tree li { flex: none; display: flex; align-items: center; height: 25px; border-top: 1px solid #2b2b2b; padding: 0 0 1px 5px; position: relative; }
.tree .l1 { padding-left: 19px; }
.tree .leaf { padding-left: 54px; }
.tree .selected { background: #464646; border-top-color: #464646; }
.tw { width: 20px; }
.fold { margin-right: 9px; color: #b5b5b5; }
.nm { padding-bottom: 1px; }
.trans { padding: 1px; border: 1px solid transparent; margin-right: 5px; color: #c0c0c0; }
.selected .trans { border-color: #2d8ceb; }
.badges { position: absolute; left: 429px; top: 3px; display: flex; gap: 23px; }
.sb { width: 15px; background: #1c1c1c; padding: 59px 1px 0; }
.sb i { height: 210px; border-radius: 6px; background: #323232; }
.efoot { flex: none; display: flex; align-items: center; justify-content: flex-end; gap: 15px; height: 23px; padding: 0 27px 0 0; color: #b5b5b5; }
.efoot .off { color: #4c4c4c; }
.ctx { position: absolute; left: 153px; top: 289px; padding: 3px; background: #f0f0f0; box-shadow: 3px 3px 4px #0009; }
.ctx button { display: block; width: 272px; height: 24px; padding-left: 34px; background: #91c9f7; color: #000; font: 400 15px/24px "Noto Sans CJK SC", sans-serif; text-align: left; }
.arrow { position: absolute; left: 318px; top: 142px; }

/* toolbar */
.tools { align-items: center; padding-top: 20px; gap: 2px; color: #b5b5b5; }
.tools button { position: relative; display: flex; align-items: center; justify-content: center; width: 34px; height: 32px; border: 1px solid transparent; }
.tools .active { border-color: #303030; border-radius: 3px; background: #161616; color: #2d8ceb; }
.tools i { position: absolute; right: 1px; bottom: 0; border: solid transparent; border-width: 0 0 4px 4px; border-bottom-color: #8c8c8c; }

/* timeline */
.timeline .tabs { padding-left: 14px; }
.close { width: 20px; font-size: 12px; line-height: 22px; }
.tlmain { flex: 1; min-height: 0; display: flex; padding-right: 16px; }
.tracks { position: relative; flex: 1; min-width: 0; display: flex; flex-direction: column; }
.tltop { flex: none; display: flex; height: 57px; }
.tlhead { width: 296px; padding: 5px 0 0 22px; }
.bigtc { color: #2d8ceb; font-size: 20px; font-weight: 400; line-height: 22px; }
.tlicons { display: flex; align-items: center; gap: 27px; margin: 7px 0 0 5px; height: 18px; color: #2d8ceb; }
.tlicons .g { color: #b5b5b5; }
.ruler { position: relative; flex: 1; overflow: hidden; }
.lab { position: absolute; top: 17px; width: 74px; margin-left: -33px; font-size: 14px; color: #a0a0a0; }
.ticks { position: absolute; left: 0; top: 38px; }
.work { position: absolute; left: 0; top: 53px; width: 533px; height: 3px; background: #f2ee00; }
.track { flex: none; display: flex; height: 31px; border-top: 1px solid #303030; }
.track.first { height: 30px; border-top: 0; }
.track.blank { flex: 1; border-top: 0; }
.track.tail { height: 26px; border-top-width: 2px; }
.hd { display: flex; align-items: center; width: 296px; padding-left: 16px; border-right: 1px solid #303030; background: #262626; font: 400 12px/30px "Noto Sans", sans-serif; color: #a5a5a5; }
.blank .hd, .tail .hd { background: #212121; }
.lane { flex: 1; min-width: 0; background: #202020; }
.src, .tgt { width: 40px; height: 30px; padding: 2px 2px 0 0; text-align: center; }
.on { background: #09568a; }
.lk { margin: 0 6px 2px 7px; color: #b5b5b5; }
.mid { display: flex; align-items: center; gap: 17px; width: 67px; height: 30px; padding-left: 10px; background: #232323; color: #b5b5b5; }
.mid svg:first-child { margin-bottom: 2px; }
.mid.audio { width: 34px; }
.ms { width: 34px; text-align: center; }
.mic { margin-left: 10px; color: #b5b5b5; }
.mname { width: 99px; padding: 0 0 2px 2px; font: 300 17px/28px "Noto Sans CJK SC", sans-serif; color: #969696; }
.mval { flex: 1; color: #2d8ceb; font-size: 14px; }
.bow { margin: 0 10px 9px 0; color: #b5b5b5; }
.split { flex: none; height: 7px; border: solid #303030; border-width: 2px 0; background: #232323; margin-right: -16px; }
.clips { display: grid; grid-template-columns: repeat(9, 1fr); gap: 1px; width: 532px; height: 30px; }
.clip { display: flex; gap: 8px; padding: 5px 0 0 11px; border-left: 2px solid #f0b8f0; background: #e483e4; color: #111; font-size: 14px; font-weight: 400; line-height: 14px; }
.clip.selected { border: 5px solid #dedede; padding: 0 0 0 8px; }
.fxb { flex: none; width: 14px; height: 14px; border: 1px solid #a9a9a9; background: #686868; color: #111; font: italic 700 11px/11px "Liberation Serif", serif; text-align: center; }
.aclip { position: relative; width: 371px; height: 30px; border-right: 1px solid #111; background: #1a6b4d; }
.aclip .fxb { position: absolute; left: 13px; top: 3px; }
.playhead { position: absolute; left: 832px; top: 38px; bottom: 0; width: 1px; background: #2d8ceb; }
.playhead svg { margin-left: -7px; }
.vs { display: flex; flex-direction: column; gap: 3px; width: 14px; padding: 59px 0 0 1px; }
.range.v { padding: 2px 0; }
.range.v.grow { flex: 1; }
.hs { flex: none; display: flex; margin: 0 31px 16px 17px; height: 15px; padding-bottom: 1px; border-radius: 7px; background: #1c1c1c; }
.hs .range { width: 288px; }

/* audio meters */
.mbody { flex: 1; min-height: 0; display: flex; padding: 33px 11px 0 16px; }
.mbox { flex: 1; display: flex; flex-direction: column; border: 1px solid #000; background: #1e1e1e; }
.mtop, .mlow { display: flex; gap: 1px; }
.mtop { height: 12px; border-bottom: 1px solid #000; background: #000; }
.mtop i { flex: 1; background: #232323; }
.mlow { flex: 1; align-items: flex-end; padding-bottom: 2px; }
.mlow i { flex: 1; height: 1px; background: #fff700; }
.mticks { margin-top: 14px; height: calc(100% - 18px); overflow: visible; }
.mlabels { display: flex; flex-direction: column; justify-content: space-between; width: 27px; padding: 6px 0 0 4px; margin-bottom: -2px; font: 400 11px/16px "Noto Sans", sans-serif; }
.solo { flex: none; display: flex; gap: 49px; height: 41px; padding: 4px 0 0 41px; }
.solo button { width: 22px; height: 22px; border: 1px solid #303030; border-radius: 3px; background: #1c1c1c; color: #a5a5a5; font: 400 11px/18px "Noto Sans", sans-serif; }

.status { flex: none; display: flex; align-items: center; justify-content: space-between; height: 25px; margin-top: 3px; padding: 0 11px 0 3px; background: #262626; }
.status svg { margin-bottom: 2px; }
.status span { padding-top: 6px; color: #b8b8b8; font: 400 16px/20px "Liberation Sans", sans-serif; }
.taskbar { flex: none; display: flex; height: 9px; overflow: hidden; background: #404854; }
.task { width: 61px; height: 9px; margin-left: 246px; background: #54606d; }
.taskbar span { margin-left: auto; margin-right: 87px; color: #fff; font: 400 14px/22px "Open Sans", sans-serif; padding-top: 2px; }
.edge { width: 1px; margin-right: 5px; background: #8a93a0; }
</style>
